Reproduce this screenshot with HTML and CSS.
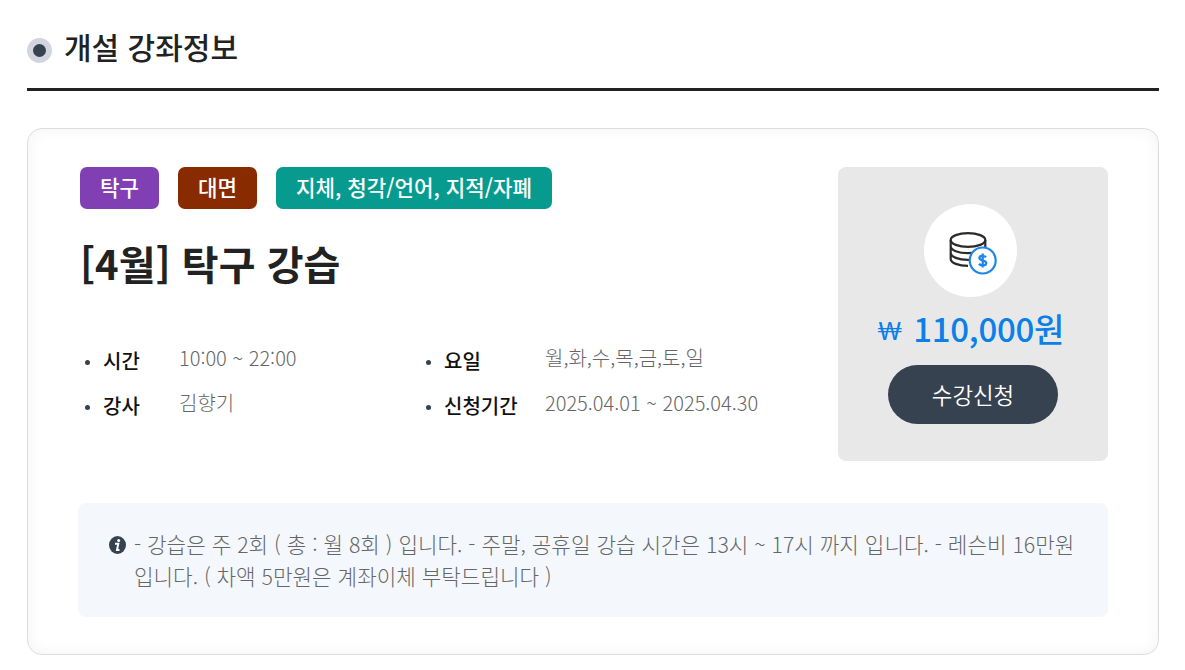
FILE: index.html
```
<!DOCTYPE html>
<html lang="ko">
<head>
  <meta charset="utf-8">
  <title>개설 강좌정보</title>
  <link rel="stylesheet" href="styles.css">
</head>
<body>
  <h2 class="page-title">개설 강좌정보</h2>

  <div class="course-box">
    <div class="course-top">
      <div class="course-info">
        <div class="tags">
          <span class="tag sport">탁구</span>
          <span class="tag offline">대면</span>
          <span class="tag target">지체, 청각/언어, 지적/자폐</span>
        </div>
        <h3 class="course-name">[4월] 탁구 강습</h3>
        <ul class="info-list">
          <li><strong>시간</strong><span>10:00 ~ 22:00</span></li>
          <li><strong>요일</strong><span>월,화,수,목,금,토,일</span></li>
          <li><strong>강사</strong><span>김향기</span></li>
          <li><strong>신청기간</strong><span>2025.04.01 ~ 2025.04.30</span></li>
        </ul>
      </div>

      <div class="price-box">
        <div class="price-icon">
          <svg width="50" height="44" viewBox="0 0 50 44" fill="none">
            <g stroke="#2b2b2b" stroke-width="2.2">
              <ellipse cx="20" cy="9" rx="17.3" ry="6.9"/>
              <path d="M2.7 9v19c0 3.8 7.7 6.9 17.3 6.9M37.3 9v8M2.7 15.3c0 3.8 7.7 6.9 17.3 6.9 7 0 13-1.6 15.8-4M2.7 22c0 3.8 7.7 6.9 17.3 6.9h2"/>
            </g>
            <circle cx="34.7" cy="29.5" r="13" fill="#fff" stroke="#1c86ea" stroke-width="2.2"/>
            <path d="M38 26.2c-.8-1-2-1.4-3.4-1.4-2 0-3.2 1-3.2 2.3 0 3.2 6.8 1.5 6.8 5 0 1.5-1.4 2.4-3.4 2.4-1.6 0-3-.6-3.8-1.7M34.7 22.5v14" stroke="#1c86ea" stroke-width="2.3"/>
          </svg>
        </div>
        <p class="price"><span class="won">₩</span>110,000원</p>
        <button type="button" class="apply-btn">수강신청</button>
      </div>
    </div>

    <div class="notice">
      <svg class="notice-icon" width="17" height="18" viewBox="0 0 17 18">
        <ellipse cx="8.5" cy="9" rx="8.5" ry="9" fill="#36424f"/>
        <circle cx="9.7" cy="4.5" r="1.5" fill="#fff"/>
        <path d="M6 7.7h3.3L8 13.9h2.5" fill="none" stroke="#fff" stroke-width="2"/>
      </svg>
      <p>- 강습은 주 2회 ( 총 : 월 8회 ) 입니다. - 주말, 공휴일 강습 시간은 13시 ~ 17시 까지 입니다. - 레슨비 16만원 입니다. ( 차액 5만원은 계좌이체 부탁드립니다 )</p>
    </div>
  </div>
</body>
</html>
```
FILE: styles.css
```
* {
  box-sizing: border-box;
  margin: 0;
  padding: 0;
}

body {
  padding: 28px 26px 0 27px;
  font-family: "Noto Sans CJK KR", sans-serif;
  font-size: 20px;
  font-weight: 300;
  color: #222;
  background: #fff;
}

.page-title {
  display: flex;
  align-items: center;
  height: 63px;
  padding-bottom: 24px;
  border-bottom: 3px solid #222;
  font-size: 30px;
  font-weight: 500;
  line-height: 40px;
}

.page-title::before {
  content: "";
  width: 13px;
  height: 13px;
  margin: 9px 12px 0 0;
  border: 6px solid #d2d5df;
  border-radius: 50%;
  background: #36424f;
}

.course-box {
  height: 527px;
  margin-top: 37px;
  padding: 38px 50px 0;
  border: 1px solid #ddd;
  border-radius: 15px;
  box-shadow: inset 0 0 15px rgba(0, 0, 0, 0.05);
}

.course-top {
  display: flex;
  justify-content: space-between;
  height: 294px;
}

.course-info {
  padding-left: 2px;
}

.tags {
  display: flex;
  gap: 19px;
}

.tag {
  height: 42px;
  padding: 0 20px;
  border-radius: 7px;
  font-size: 21.2px;
  font-weight: 500;
  line-height: 40px;
  color: #fff;
}

.sport {
  background: #8040b3;
}

.offline {
  background: #882b00;
}

.target {
  background: #069b8e;
}

.course-name {
  margin-top: 24px;
  font-size: 40px;
  font-weight: 700;
  line-height: 60px;
}

.info-list {
  display: grid;
  grid-template-columns: 341px auto;
  margin-top: 43px;
  list-style: none;
}

.info-list li {
  display: flex;
  align-items: center;
  height: 45px;
  line-height: 30px;
}

.info-list li::before {
  content: "";
  width: 5px;
  height: 5px;
  margin: 8px 13px 0 5px;
  border-radius: 50%;
  background: #36424f;
}

.info-list strong {
  width: 76px;
  padding-top: 5px;
  font-weight: 500;
  color: #111;
}

.info-list li:nth-child(even) strong {
  width: 101px;
}

.info-list span {
  margin-top: -2px;
  color: #666;
}

.price-box {
  display: flex;
  flex-direction: column;
  align-items: center;
  width: 270px;
  height: 294px;
  padding-top: 37px;
  border-radius: 8px;
  background: #e8e8e8;
}

.price-icon {
  display: flex;
  align-items: center;
  justify-content: center;
  width: 93px;
  height: 93px;
  margin-right: 5px;
  padding: 5px 0 0 4px;
  border-radius: 50%;
  background: #fff;
}

.price {
  display: flex;
  justify-content: flex-end;
  width: 100%;
  height: 50px;
  margin-top: 6px;
  padding-right: 44px;
  font-size: 33px;
  font-weight: 500;
  line-height: 50px;
  letter-spacing: -0.3px;
  color: #0c7fe8;
}

.won {
  margin: 3px 11px 0 0;
  font-family: Lato, sans-serif;
  font-size: 24.5px;
  font-weight: 400;
}

.apply-btn {
  width: 170px;
  height: 59px;
  margin-top: 12px;
  padding-bottom: 2px;
  border: 0;
  border-radius: 30px;
  font: 350 22.4px "Noto Sans CJK KR", sans-serif;
  color: #fff;
  background: #36424f;
}

.notice {
  display: flex;
  height: 114px;
  margin-top: 42px;
  padding: 25px 30px;
  border-radius: 8px;
  background: #f4f8fc;
}

.notice-icon {
  flex: none;
  margin: 8px 8px 0 1px;
}

.notice p {
  font-size: 21.25px;
  line-height: 32px;
  color: #666;
}
```
